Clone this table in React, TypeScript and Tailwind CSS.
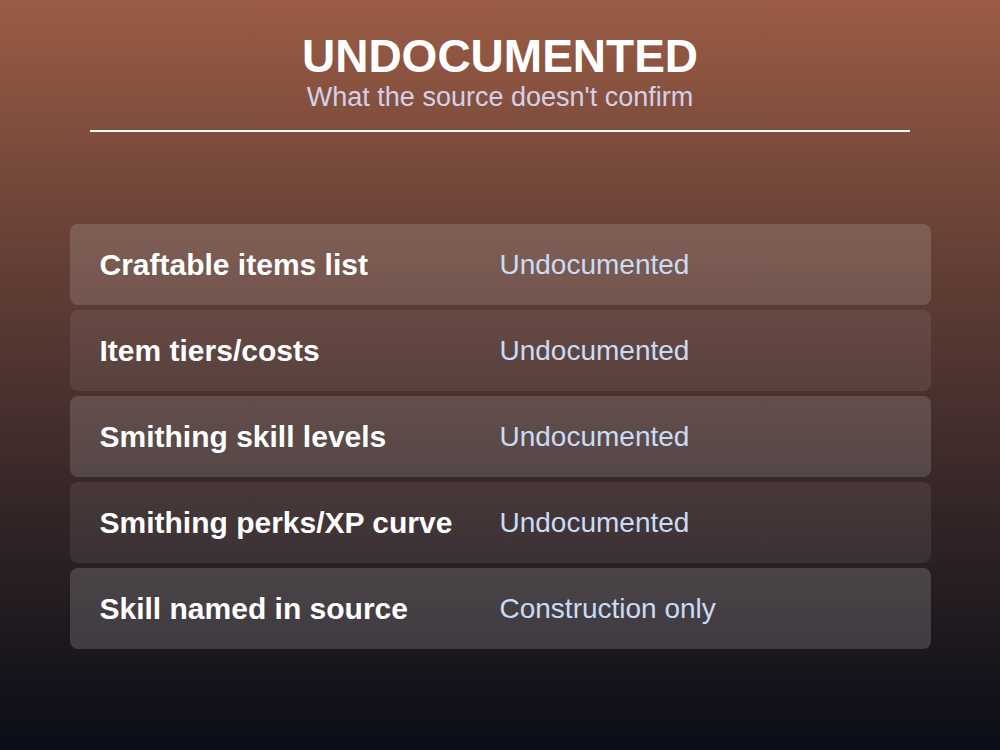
import React from "react";

const rows = [
  { label: "Craftable items list", value: "Undocumented", bg: "bg-white/[0.14]" },
  { label: "Item tiers/costs", value: "Undocumented", bg: "bg-white/[0.08]" },
  { label: "Smithing skill levels", value: "Undocumented", bg: "bg-white/[0.14]" },
  { label: "Smithing perks/XP curve", value: "Undocumented", bg: "bg-white/[0.08]" },
  { label: "Skill named in source", value: "Construction only", bg: "bg-white/[0.16]" },
];

export default function App() {
  return (
    <div
      className="w-[1000px] h-[750px] bg-gradient-to-b from-[#9b5c44] to-[#0a0d17] flex flex-col items-center"
      style={{ fontFamily: '"Liberation Sans", Arial, sans-serif' }}
    >
      <h1 className="mt-[30px] text-[46px] leading-[52px] font-bold text-white">UNDOCUMENTED</h1>
      <p className="text-[27px] leading-[30px] text-[#d4d0ea]">What the source doesn't confirm</p>
      <div className="mt-[18px] w-[820px] h-[2px] bg-white" />
      <div className="mt-[92px] w-[861px] flex flex-col gap-[5px]">
        {rows.map((r) => (
          <div key={r.label} className={`h-[81px] rounded-[8px] ${r.bg} flex items-center pl-[30px]`}>
            <div className="w-[400px] text-[30px] font-bold text-white">{r.label}</div>
            <div className="text-[28px] text-[#c9dcf5]">{r.value}</div>
          </div>
        ))}
      </div>
    </div>
  );
}
